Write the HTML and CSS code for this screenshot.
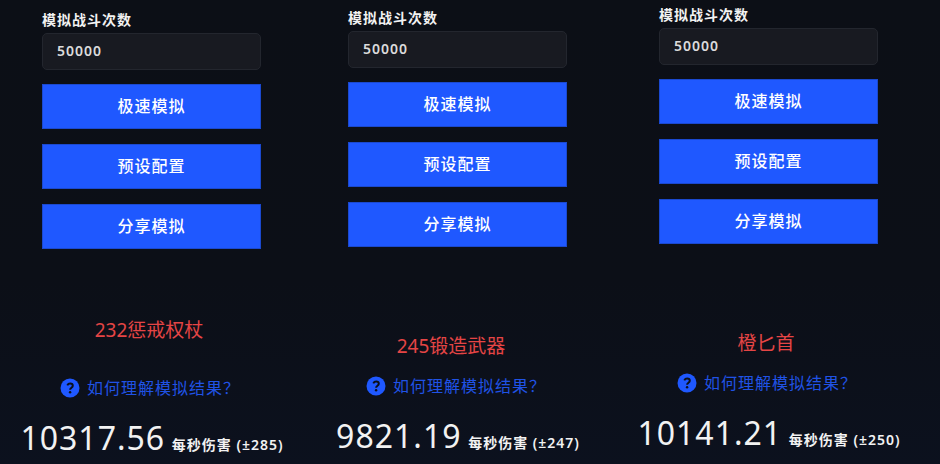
FILE: index.html
```html
<!DOCTYPE html>
<html lang="zh-CN">
<head>
  <meta charset="UTF-8">
  <meta name="viewport" content="width=device-width, initial-scale=1.0">
  <title>模拟结果对比</title>
  <link rel="stylesheet" href="styles.css">
</head>
<body>

<!-- Shared icon -->
<svg class="sprite" aria-hidden="true">
  <symbol id="question" viewBox="0 0 20 20">
    <circle class="disc" cx="10" cy="10" r="9.500"/>
    <path class="mark" d="M7.300 7.400C7.900 6.200 8.800 5.600 10.100 5.600c1.600 0 2.700.9 2.700 2.200 0 2-2.700 1.900-2.700 4"/>
    <circle class="dot" cx="10.100" cy="14.300" r="1.200"/>
  </symbol>
</svg>

<main class="compare">

  <!-- 232 mace -->
  <section class="panel">
    <form class="sim-form">
      <label for="count-1">模拟战斗次数</label>
      <input type="text" id="count-1" value="50000">
      <button type="button">极速模拟</button>
      <button type="button">预设配置</button>
      <button type="button">分享模拟</button>
    </form>
    <p class="note note-high">232惩戒权杖</p>
    <a class="help" href="#">
      <svg aria-hidden="true"><use href="#question"/></svg>
      <span>如何理解模拟结果？</span>
    </a>
    <p class="result"><span class="dps">10317.56</span> 每秒伤害 (±285)</p>
  </section>

  <!-- 245 crafted weapon -->
  <section class="panel panel-2">
    <form class="sim-form">
      <label for="count-2">模拟战斗次数</label>
      <input type="text" id="count-2" value="50000">
      <button type="button">极速模拟</button>
      <button type="button">预设配置</button>
      <button type="button">分享模拟</button>
    </form>
    <p class="note note-left">245锻造武器</p>
    <a class="help" href="#">
      <svg aria-hidden="true"><use href="#question"/></svg>
      <span>如何理解模拟结果？</span>
    </a>
    <p class="result"><span class="dps">9821.19</span> 每秒伤害 (±247)</p>
  </section>

  <!-- legendary dagger -->
  <section class="panel panel-3">
    <form class="sim-form">
      <label for="count-3">模拟战斗次数</label>
      <input type="text" id="count-3" value="50000">
      <button type="button">极速模拟</button>
      <button type="button">预设配置</button>
      <button type="button">分享模拟</button>
    </form>
    <p class="note">橙匕首</p>
    <a class="help" href="#">
      <svg aria-hidden="true"><use href="#question"/></svg>
      <span>如何理解模拟结果？</span>
    </a>
    <p class="result"><span class="dps">10141.21</span> 每秒伤害 (±250)</p>
  </section>

</main>

</body>
</html>
```

FILE: styles.css
```css
* {
  box-sizing: border-box;
}

body {
  margin: 0;
  min-height: 100vh;
  font-family: "Noto Sans", "Noto Sans CJK SC", sans-serif;
  font-size: 14px;
  letter-spacing: 1px;
  color: #f2f2f2;
  background: linear-gradient(#0c0f16, #0c0f17 60%, #0c111e);
}

.sprite {
  display: none;
}

.compare {
  display: grid;
  grid-template-columns: 306fr 311fr 323fr;
}

.panel {
  display: flex;
  flex-direction: column;
  max-width: 304px;
  padding-top: 9px;
}

.panel-2 {
  padding-top: 7px;
}

.panel-3 {
  padding-top: 4px;
}

.sim-form {
  display: flex;
  flex-direction: column;
  gap: 15px;
  padding: 0 43px 0 42px;
}

.sim-form label {
  height: 24px;
  margin-bottom: -15px;
  line-height: 22px;
  font-weight: 600;
}

.sim-form input {
  width: 100%;
  height: 37px;
  margin-bottom: -1px;
  padding: 0 14px 2px;
  font: inherit;
  font-weight: 600;
  letter-spacing: inherit;
  color: #dcdcdc;
  background: #181a21;
  border: 1px solid #23262e;
  border-radius: 5px;
}

.sim-form button {
  height: 45px;
  padding: 0 0 4px;
  font: inherit;
  font-size: 16px;
  font-weight: 500;
  letter-spacing: inherit;
  color: #fff;
  background: #1f58ff;
  border: 1px solid #1b49cf;
  cursor: pointer;
}

/* weapon name */
.note {
  height: 124px;
  margin: 0;
  padding: 86px 6px 0 0;
  font-size: 19px;
  line-height: 26px;
  letter-spacing: normal;
  text-align: center;
  color: #e54545;
}

.note-high {
  padding-top: 68px;
}

.note-left {
  padding-right: 14px;
}

.help {
  display: flex;
  align-items: center;
  justify-content: center;
  gap: 7px;
  height: 30px;
  padding-right: 4px;
  font-size: 16px;
  color: #2053e6;
  text-decoration: none;
}

.help svg {
  width: 20px;
  height: 20px;
}

.help span {
  padding-bottom: 2px;
}

.disc {
  fill: #1f58ff;
}

.mark {
  fill: none;
  stroke: #0c101a;
  stroke-width: 2;
}

.dot {
  fill: #0c101a;
}

.result {
  margin: 0;
  padding-top: 12px;
  line-height: 46px;
  font-weight: 600;
  text-align: center;
  white-space: nowrap;
}

.dps {
  margin-right: 2px;
  font-size: 32px;
  font-weight: 400;
}
```
